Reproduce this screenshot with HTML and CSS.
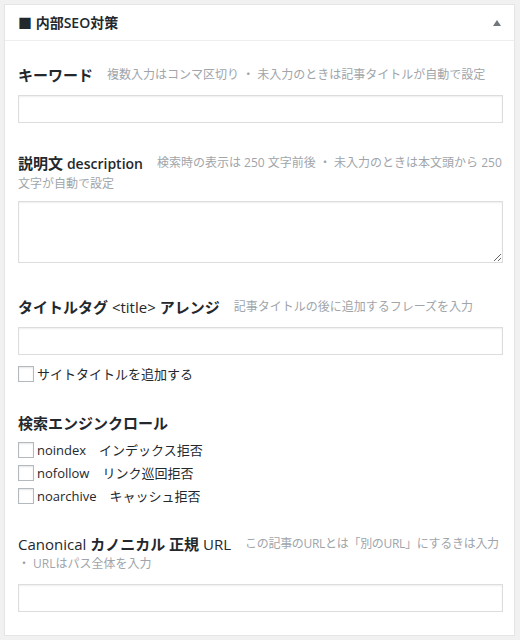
FILE: index.html
```html
<!DOCTYPE html>
<html lang="ja">
<head>
<meta charset="utf-8">
<title>内部SEO対策</title>
<link rel="stylesheet" href="styles.css">
</head>
<body>
<div class="postbox">
  <div class="postbox-header">
    <h2 class="postbox-title">■ 内部SEO対策</h2>
    <span class="toggle" aria-hidden="true"></span>
  </div>
  <div class="postbox-body">
    <div class="field">
      <p class="field-head"><span class="label">キーワード</span><span class="hint">複数入力はコンマ区切り ・ 未入力のときは記事タイトルが自動で設定</span></p>
      <input class="text-input" type="text">
    </div>
    <div class="field field-ta">
      <p class="field-head field-head-desc"><span class="label">説明文 <span class="latin-b">description</span></span><span class="hint"><span class="nw">検索時の表示は 250 文字前後 ・ 未入力のときは本文頭から 250</span><br>文字が自動で設定</span></p>
      <textarea class="text-area"></textarea>
    </div>
    <div class="field">
      <p class="field-head"><span class="label">タイトルタグ <span class="normal">&lt;title&gt;</span> アレンジ</span><span class="hint">記事タイトルの後に追加するフレーズを入力</span></p>
      <input class="text-input" type="text">
      <label class="check check-single"><span class="box"></span>サイトタイトルを追加する</label>
    </div>
    <div class="field">
      <p class="field-head"><span class="label">検索エンジンクロール</span></p>
      <div class="check-list">
        <label class="check"><span class="box"></span>noindex　インデックス拒否</label>
        <label class="check"><span class="box"></span>nofollow　リンク巡回拒否</label>
        <label class="check"><span class="box"></span>noarchive　キャッシュ拒否</label>
      </div>
    </div>
    <div class="field field-last">
      <p class="field-head"><span class="label"><span class="normal">Canonical</span> カノニカル 正規 <span class="normal">URL</span></span><span class="hint"><span class="nw tight">この記事のURLとは「別のURL」にするきは入力</span><br>・ URLはパス全体を入力</span></p>
      <input class="text-input" type="text">
    </div>
  </div>
</div>
</body>
</html>
```

FILE: styles.css
```css
* { box-sizing: border-box; }
html, body { margin: 0; padding: 0; }
body {
  background: #f1f1f1;
  font-family: "Open Sans", "Noto Sans CJK JP", sans-serif;
  color: #23282d;
  padding: 4px 5px 0 4px;
}
.postbox {
  background: #fff;
  border: 1px solid #e5e5e5;
  box-shadow: 0 1px 1px rgba(0,0,0,0.04);
}
.postbox-header {
  display: flex;
  align-items: center;
  justify-content: space-between;
  height: 36px;
  padding: 0 13px 0 13px;
  border-bottom: 1px solid #eeeeee;
}
.postbox-title {
  margin: 0;
  font-size: 14px;
  font-weight: 600;
  line-height: 20px;
  color: #23282d;
}
.toggle {
  width: 0;
  height: 0;
  border-left: 4px solid transparent;
  border-right: 4px solid transparent;
  border-bottom: 6px solid #72777c;
  margin-right: 0;
}
.postbox-body {
  padding: 24px 11px 23px 13px;
}
.field + .field { margin-top: 30px; }
.field + .field-last { margin-top: 29px; }
.field-ta { padding-bottom: 4px; }
.field-head {
  margin: 0 0 10px;
  font-size: 12px;
  line-height: 20px;
}
.field-head-desc { margin-bottom: 7px; }
.label {
  font-size: 15px;
  font-weight: 700;
  line-height: 20px;
  vertical-align: top;
  color: #23282d;
  margin-right: 14px;
}
.label .normal { font-weight: 400; }
.latin-b { font-weight: 600; font-size: 14px; }
.hint {
  font-size: 12px;
  line-height: 20px;
  vertical-align: top;
  color: #a0a5aa;
}
.nw { white-space: nowrap; }
.tight { letter-spacing: -0.3px; }
.text-input {
  display: block;
  width: 100%;
  height: 28px;
  margin: 0;
  border: 1px solid #dddddd;
  box-shadow: inset 0 1px 2px rgba(0,0,0,0.07);
  background: #fff;
  font: inherit;
}
.text-area {
  display: block;
  width: 100%;
  height: 62px;
  margin: 0;
  border: 1px solid #dddddd;
  box-shadow: inset 0 1px 2px rgba(0,0,0,0.07);
  font: inherit;
}
.check {
  display: flex;
  align-items: center;
  height: 18px;
  font-size: 13px;
  color: #23282d;
  line-height: 18px;
}
.check-single { margin-top: 10px; }
.check-list {
  display: flex;
  flex-direction: column;
  gap: 5px;
  margin-top: -2px;
}
.box {
  width: 16px;
  height: 16px;
  border: 1px solid #b4b9be;
  background: #fff;
  box-shadow: inset 0 1px 2px rgba(0,0,0,0.1);
  margin-right: 3px;
  flex: none;
}
```
